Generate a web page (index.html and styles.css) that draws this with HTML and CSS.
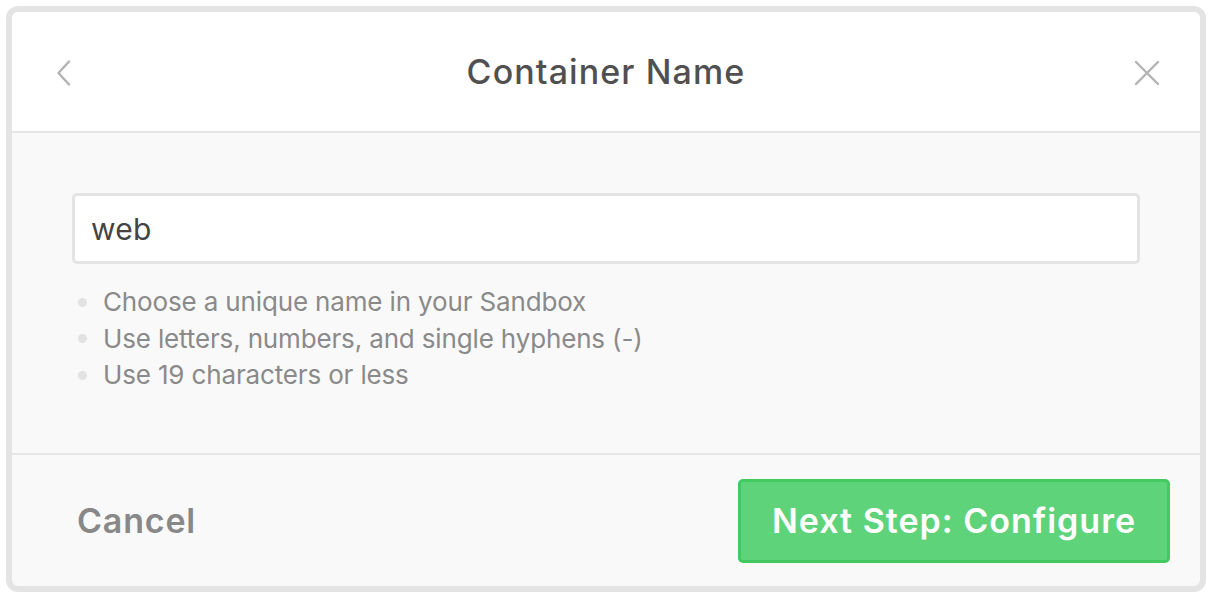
FILE: index.html
```html
<!DOCTYPE html>
<html>
<head>
<meta charset="utf-8">
<link rel="stylesheet" href="styles.css">
</head>
<body>
<div class="modal">
  <div class="header">
    <button class="icon-btn back" aria-label="Back">
      <svg width="16" height="26" viewBox="0 0 16 26"><path d="M13 1.5 L2.5 13 L13 24.5" fill="none" stroke="#b3b3b3" stroke-width="2.4" stroke-linecap="round" stroke-linejoin="round"/></svg>
    </button>
    <h1 class="title">Container Name</h1>
    <button class="icon-btn close" aria-label="Close">
      <svg width="26" height="26" viewBox="0 0 26 26"><path d="M2 2 L24 24 M24 2 L2 24" fill="none" stroke="#b3b3b3" stroke-width="2.4" stroke-linecap="round"/></svg>
    </button>
  </div>
  <div class="body">
    <div class="input">web</div>
    <ul class="hints">
      <li>Choose a unique name in your Sandbox</li>
      <li>Use letters, numbers, and single hyphens (-)</li>
      <li>Use 19 characters or less</li>
    </ul>
  </div>
  <div class="footer">
    <span class="cancel">Cancel</span>
    <button class="primary">Next Step: Configure</button>
  </div>
</div>
</body>
</html>
```
FILE: styles.css
```css
html, body {
  margin: 0;
  padding: 0;
  background: #ffffff;
}
body {
  font-family: Inter, "Noto Sans", "Liberation Sans", sans-serif;
}
.modal {
  margin: 6px;
  width: 1200px;
  height: 586px;
  box-sizing: border-box;
  border: 6px solid #e4e4e4;
  border-radius: 12px;
  background: #f9f9f9;
  display: flex;
  flex-direction: column;
  overflow: hidden;
}
.header {
  height: 119px;
  background: #ffffff;
  border-bottom: 2px solid #e6e6e6;
  display: flex;
  align-items: center;
  justify-content: space-between;
  padding: 0 40px 0 44px;
  flex-shrink: 0;
}
.icon-btn {
  background: none;
  border: none;
  padding: 0;
  display: flex;
  align-items: center;
  justify-content: center;
  width: 26px;
  height: 26px;
}
.icon-btn.back {
  justify-content: flex-start;
  margin-top: 2px;
}
.icon-btn.close {
  margin-top: 2px;
}
.title {
  margin: 0 0 0 -4px;
  font-size: 34px;
  font-weight: 500;
  color: #505050;
  letter-spacing: 1.1px;
}
.body {
  flex: 1;
  padding: 60px 60px 0 60px;
  border-bottom: 2px solid #e6e6e6;
}
.input {
  height: 71px;
  box-sizing: border-box;
  border: 3px solid #e4e4e4;
  border-radius: 5px;
  background: #ffffff;
  font-size: 30px;
  letter-spacing: 0.3px;
  color: #444444;
  padding: 0 16px;
  display: flex;
  align-items: center;
}
.hints {
  list-style: none;
  margin: 20px 0 0 0;
  padding: 0 0 0 6px;
}
.hints li {
  font-size: 26px;
  letter-spacing: -0.15px;
  line-height: 36.5px;
  color: #8a8a8a;
  display: flex;
  align-items: center;
}
.hints li::before {
  content: "";
  width: 9px;
  height: 9px;
  border-radius: 50%;
  background: #e2e2e2;
  margin-right: 16px;
  flex-shrink: 0;
}
.footer {
  height: 131px;
  flex-shrink: 0;
  display: flex;
  align-items: center;
  justify-content: space-between;
  padding: 0 30px 0 65px;
}
.cancel {
  font-size: 34px;
  font-weight: 600;
  letter-spacing: 0.8px;
  color: #888888;
}
.primary {
  width: 432px;
  height: 84px;
  box-sizing: border-box;
  background: #5fd37a;
  border: 3px solid #42c95f;
  border-radius: 5px;
  color: #ffffff;
  font-family: Inter, "Noto Sans", "Liberation Sans", sans-serif;
  font-size: 34px;
  font-weight: 600;
  letter-spacing: 1px;
  padding: 0;
}
```
